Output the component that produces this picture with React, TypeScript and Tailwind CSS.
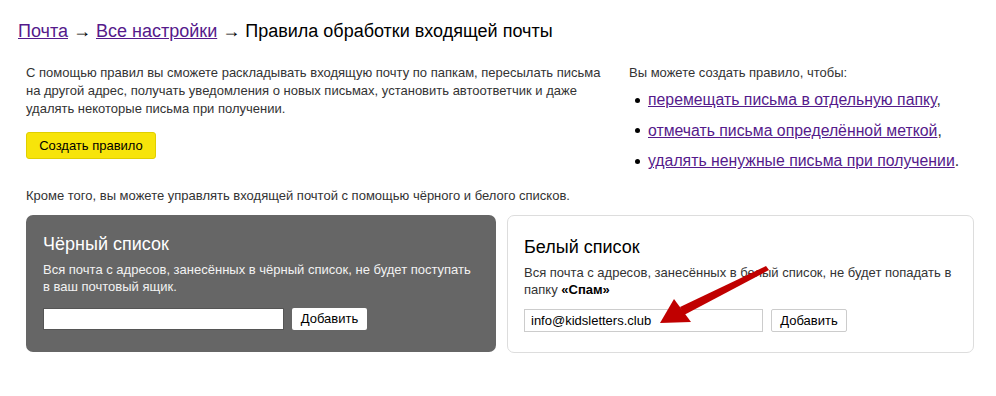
import React from "react";

export default function App() {
  const font = { fontFamily: '"Liberation Sans", Arial, sans-serif' };
  return (
    <div className="relative w-[996px] h-[396px] bg-white text-[#333]" style={font}>
      <div className="pl-[18px] pt-[20px]">
        <div className="text-[18px] leading-[22px] text-black">
          <a href="#" className="text-[#551a8b] underline">Почта</a>
          {" → "}
          <a href="#" className="text-[#551a8b] underline">Все настройки</a>
          {" → Правила обработки входящей почты"}
        </div>
      </div>
      <div className="pl-[26px] pr-[22px] mt-[22px]">
        <div className="flex">
          <div className="w-[603px]">
            <p className="w-[585px] text-[13px] leading-[18px]">
              С помощью правил вы сможете раскладывать входящую почту по папкам, пересылать письма на другой адрес, получать уведомления о новых письмах, установить автоответчик и даже удалять некоторые письма при получении.
            </p>
            <button className="mt-[14px] h-[27px] w-[130px] bg-[#f7e40a] border border-[#e0cf00] rounded-[3px] text-[13px] text-black">
              Создать правило
            </button>
            <p className="mt-[28px] text-[13px] leading-[18px]">
              Кроме того, вы можете управлять входящей почтой с помощью чёрного и белого списков.
            </p>
          </div>
          <div className="flex-1">
            <p className="text-[13px] leading-[18px]">Вы можете создать правило, чтобы:</p>
            <ul className="mt-[3px] text-[15.8px]">
              {[
                ["перемещать письма в отдельную папку", ","],
                ["отмечать письма определённой меткой", ","],
                ["удалять ненужные письма при получении", "."],
              ].map(([t, p]) => (
                <li key={t} className="flex items-center h-[30.5px]">
                  <span className="ml-[6px] w-[5px] h-[5px] rounded-full bg-black" />
                  <span className="ml-[8px]">
                    <a href="#" className="text-[#551a8b] underline">{t}</a>
                    <span className="text-[#333]">{p}</span>
                  </span>
                </li>
              ))}
            </ul>
          </div>
        </div>
        <div className="mt-[10px] grid grid-cols-[470px_467px] gap-[11px]">
          <div className="h-[137px] rounded-[7px] bg-[#666] px-[17px] pt-[18px]">
            <div className="text-[18px] leading-[22px] text-white">Чёрный список</div>
            <p className="mt-[6px] text-[13px] leading-[17px] text-[#f2f2f2]">
              Вся почта с адресов, занесённых в чёрный список, не будет поступать в ваш почтовый ящик.
            </p>
            <div className="mt-[13px] flex gap-[8px]">
              <input className="w-[241px] h-[22px] bg-white border border-[#555] text-[13px] px-[6px] outline-none" />
              <button className="h-[22px] w-[75px] bg-white rounded-[2px] text-[13px] text-black">Добавить</button>
            </div>
          </div>
          <div className="h-[138px] rounded-[7px] border border-[#ddd] bg-white px-[16px] pt-[20px]">
            <div className="text-[18px] leading-[22px] text-black">Белый список</div>
            <p className="mt-[6px] text-[13px] leading-[17px] text-[#333]">
              Вся почта с адресов, занесённых в белый список, не будет попадать в папку{" "}
              <span className="font-bold text-black">«Спам»</span>
            </p>
            <div className="mt-[11px] flex gap-[8px]">
              <input
                defaultValue="info@kidsletters.club"
                className="w-[239px] h-[23px] bg-white border border-[#ccc] text-[13px] px-[6px] text-black outline-none"
              />
              <button className="h-[23px] w-[76px] bg-white border border-[#ccc] rounded-[2px] text-[13px] text-black">Добавить</button>
            </div>
          </div>
        </div>
      </div>
      <svg className="absolute left-0 top-0 pointer-events-none" width="996" height="396">
        <polygon points="766,266 769,270 684,315 680,307" fill="#c00000" />
        <polygon points="660,323 674,299 691,322" fill="#c00000" />
      </svg>
    </div>
  );
}
